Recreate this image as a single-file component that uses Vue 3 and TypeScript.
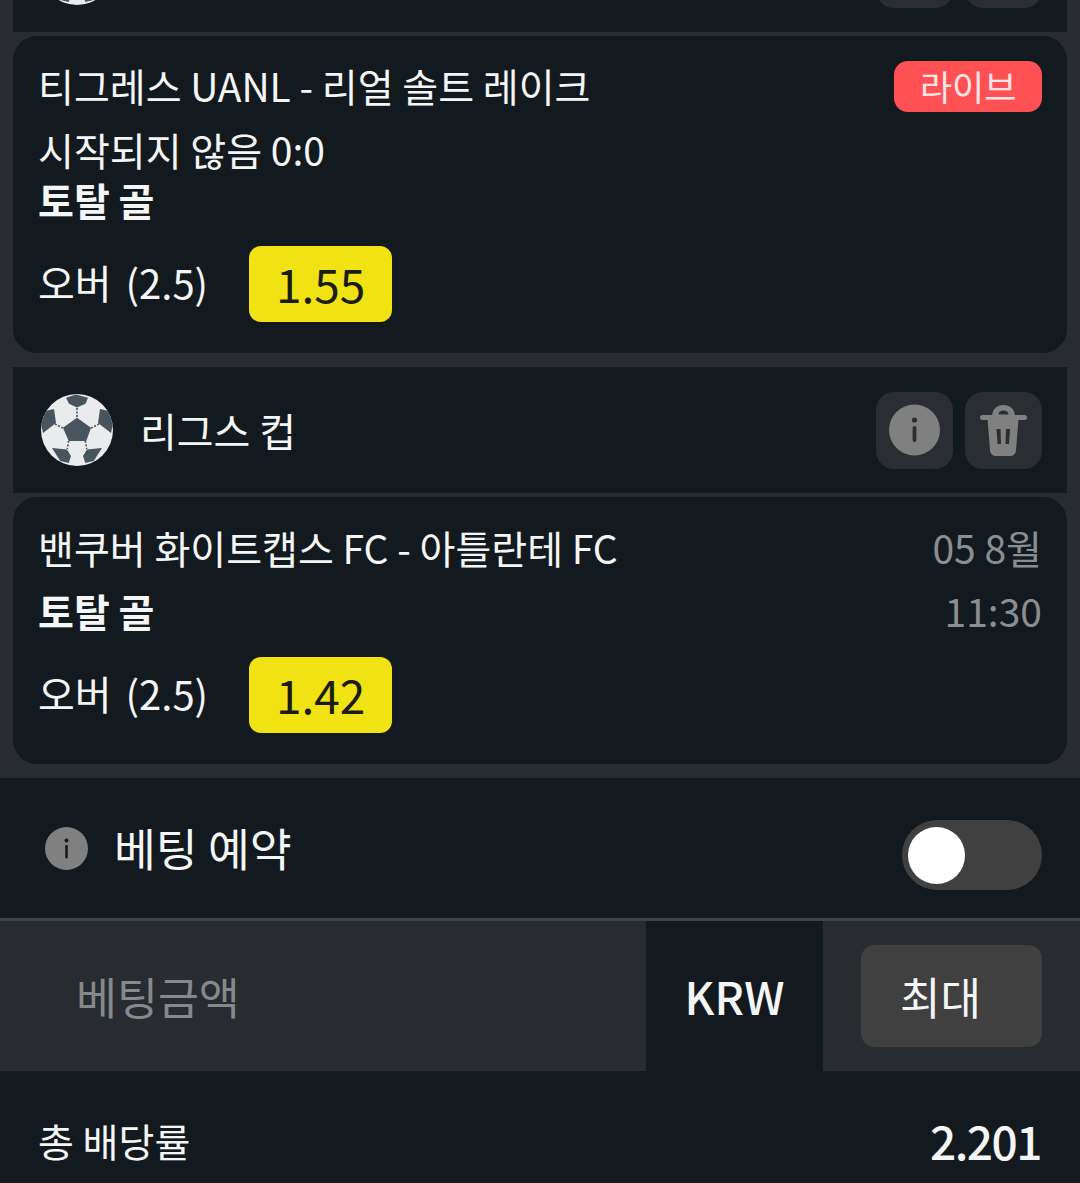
<script setup lang="ts">
interface Bet {
  league: string
  teams: string
  live?: boolean
  status?: string
  date?: string
  time?: string
  market: string
  pick: string
  odds: string
}

const bets: Bet[] = [
  {
    league: '',
    teams: '티그레스 UANL - 리얼 솔트 레이크',
    live: true,
    status: '시작되지 않음 0:0',
    market: '토탈 골',
    pick: '오버 (2.5)',
    odds: '1.55',
  },
  {
    league: '리그스 컵',
    teams: '밴쿠버 화이트캡스 FC - 아틀란테 FC',
    date: '05 8월',
    time: '11:30',
    market: '토탈 골',
    pick: '오버 (2.5)',
    odds: '1.42',
  },
]

// dashed stitching between the ball's panels
const seams = [
  'M36 14v9', 'M22 34l-8-4', 'M50 34l8-4', 'M27.700 47l-1.500 8', 'M44.300 47l1.500 8',
]
</script>

<template>
  <div class="slip">
    <section class="list">
      <div v-for="(bet, i) in bets" :key="bet.teams" class="group">
        <header class="league" :class="{ first: i === 0 }">
          <svg class="ball" viewBox="0 0 72 72" width="72" height="72">
            <defs>
              <clipPath :id="`ball-${i}`"><circle cx="36" cy="36" r="36" /></clipPath>
            </defs>
            <circle cx="36" cy="36" r="36" fill="#e9ebec" />
            <g :clip-path="`url(#ball-${i})`" fill="#47555e">
              <path d="M36 23.700L50 33.700 45.300 47H27.700L22 33.700z" />
              <path d="M25 3.700L35 .5 47 3.700 44.500 9.700 36 13.500 28 9.700z" />
              <path d="M4 17l9-2 2 14L2 39 0 30z" />
              <path d="M68 17l-9-2-2 14 13 10 2-9z" />
              <path d="M11 54l15 1.500 4 6.500-2.300 7-8.400-2z" />
              <path d="M61 54l-15 1.500-4 6.500 2.300 7 8.400-2z" />
            </g>
            <path v-for="d in seams" :key="d" :d="d" stroke="#47555e" stroke-width="1.600" stroke-dasharray="2 1.500" fill="none" />
          </svg>
          <span class="league-name">{{ bet.league }}</span>
          <div class="tools">
            <button class="tool">
              <svg viewBox="0 0 77 77" width="77" height="77">
                <circle cx="38.500" cy="38" r="25.500" fill="#808080" />
                <circle cx="38.500" cy="28" r="2.600" fill="#2a2d31" />
                <rect x="36.600" y="34" width="3.800" height="16" rx="1.900" fill="#2a2d31" />
              </svg>
            </button>
            <button class="tool">
              <svg viewBox="0 0 77 77" width="77" height="77">
                <path d="M27 25C27 17 32 13 38.500 13S50 17 50 25z" fill="#808080" />
                <path d="M33.500 22.500c0-2.500 2.200-4 5-4s5 1.500 5 4z" fill="#2a2d31" />
                <rect x="15" y="23" width="47" height="5" rx="2.500" fill="#808080" />
                <path d="M22.500 27h31l-2.500 31c-.3 4-3 6-6 6H31c-3 0-5.700-2-6-6z" fill="#808080" />
                <path d="M31.500 37h4l.5 15h-3.500z" fill="#2a2d31" />
                <path d="M41 37h4l-1 15h-3.500z" fill="#2a2d31" />
              </svg>
            </button>
          </div>
        </header>

        <article class="card" :class="{ tall: bet.live }">
          <div class="card-top">
            <div class="card-main">
              <div class="teams">{{ bet.teams }}</div>
              <div v-if="bet.status" class="status">{{ bet.status }}</div>
              <div class="market">{{ bet.market }}</div>
            </div>
            <div v-if="bet.live" class="live">라이브</div>
            <div v-else class="when">
              <span>{{ bet.date }}</span>
              <span>{{ bet.time }}</span>
            </div>
          </div>
          <div class="pick-row">
            <span class="pick">{{ bet.pick }}</span>
            <span class="odds">{{ bet.odds }}</span>
          </div>
        </article>
      </div>
    </section>

    <section class="panel">
      <div class="reserve">
        <svg class="reserve-info" viewBox="0 0 43 43" width="43" height="43">
          <circle cx="21.500" cy="21.500" r="21.500" fill="#808080" />
          <circle cx="21.500" cy="13.500" r="2" fill="#131a1f" />
          <rect x="20.200" y="18" width="2.600" height="13.500" rx="1.300" fill="#131a1f" />
        </svg>
        <span class="reserve-label">베팅 예약</span>
        <div class="toggle"><span class="knob"></span></div>
      </div>

      <div class="stake">
        <div class="stake-input">베팅금액</div>
        <div class="currency">KRW</div>
        <div class="max-wrap"><button class="max">최대</button></div>
      </div>

      <div class="total">
        <span class="total-label">총 배당률</span>
        <span class="total-value">2.201</span>
      </div>
    </section>
  </div>
</template>

<style scoped>
.slip {
  width: 1080px;
  height: 1183px;
  overflow: hidden;
  background: #282c30;
  color: #f4f5f5;
  font-family: "Noto Sans CJK KR", "Noto Sans", sans-serif;
}

.list {
  display: flex;
  flex-direction: column;
  padding: 0 13px;
  height: 778px;
  box-sizing: border-box;
}

.group + .group {
  margin-top: 14px;
}

.league {
  display: flex;
  align-items: center;
  height: 126px;
  padding: 0 25px 0 28px;
  background: #131a1f;
}

.league.first {
  margin-top: -94px;
}

.ball {
  flex: none;
}

.league-name {
  margin-left: 27px;
  font-size: 40px;
  line-height: 1;
}

.tools {
  display: flex;
  gap: 12px;
  margin-left: auto;
}

.tool {
  width: 77px;
  height: 77px;
  padding: 0;
  border: 0;
  border-radius: 18px;
  background: #2a2d31;
}

.tool svg {
  display: block;
}

.card {
  margin-top: 4px;
  height: 267px;
  padding: 25px 25px 0 25px;
  box-sizing: border-box;
  border-radius: 24px;
  background: #131a1f;
}

.card.tall {
  height: 317px;
  padding-top: 24px;
}

.card-top {
  display: flex;
  justify-content: space-between;
  align-items: flex-start;
}

.teams,
.status,
.market,
.when span {
  font-size: 39px;
  line-height: 50px;
  white-space: nowrap;
}

.pick {
  padding-bottom: 4px;
  font-size: 40px;
  line-height: 50px;
  word-spacing: 5px;
  white-space: nowrap;
}

.status {
  margin-top: 14px;
}

.market {
  font-weight: 700;
  margin-top: 13px;
}

.tall .market {
  margin-top: 0;
}

.live {
  margin-top: 1px;
  padding: 0 25.500px;
  height: 51px;
  border-radius: 14px;
  background: #ff5054;
  color: #fde6e6;
  font-size: 35px;
  line-height: 49px;
}

.when {
  display: flex;
  flex-direction: column;
  align-items: flex-end;
  gap: 13px;
  color: #8b8e90;
}

.pick-row {
  display: flex;
  align-items: center;
  gap: 41px;
  margin-top: 22px;
}

.odds {
  display: block;
  width: 143px;
  height: 76px;
  border-radius: 12px;
  background: #f1e213;
  color: #1a1c16;
  font-size: 46px;
  line-height: 75px;
  text-align: center;
}

.panel {
  background: #131a1f;
}

.reserve {
  display: flex;
  align-items: center;
  height: 140px;
  padding: 0 38px 0 45px;
  border-bottom: 3px solid #3f4144;
}

.reserve-label {
  margin-left: 26px;
  font-size: 45.500px;
  line-height: 1;
}

.toggle {
  display: flex;
  align-items: center;
  width: 140px;
  height: 70px;
  margin-top: 14px;
  margin-left: auto;
  padding-left: 6px;
  box-sizing: border-box;
  border-radius: 35px;
  background: #404040;
}

.knob {
  width: 57px;
  height: 57px;
  border-radius: 50%;
  background: #fff;
}

.stake {
  display: flex;
  height: 150px;
  background: #282c30;
}

.stake-input {
  width: 646px;
  padding-left: 76px;
  box-sizing: border-box;
  color: #86898b;
  font-size: 44.500px;
  line-height: 150px;
}

.currency {
  width: 177px;
  background: #131a1f;
  font-size: 45px;
  font-weight: 500;
  line-height: 150px;
  text-align: center;
}

.max-wrap {
  display: flex;
  align-items: center;
  flex: 1;
  padding: 0 38px;
}

.max {
  width: 100%;
  height: 102px;
  padding: 0 22px 0 0;
  border: 0;
  border-radius: 14px;
  background: #404040;
  color: #f4f5f5;
  font-family: inherit;
  font-size: 44px;
}

.total {
  display: flex;
  justify-content: space-between;
  align-items: center;
  height: 138px;
  padding: 0 39px;
}

.total-label {
  margin-left: -1px;
  font-size: 39px;
}

.total-value {
  font-size: 46px;
  font-weight: 500;
  letter-spacing: -1.500px;
}
</style>
